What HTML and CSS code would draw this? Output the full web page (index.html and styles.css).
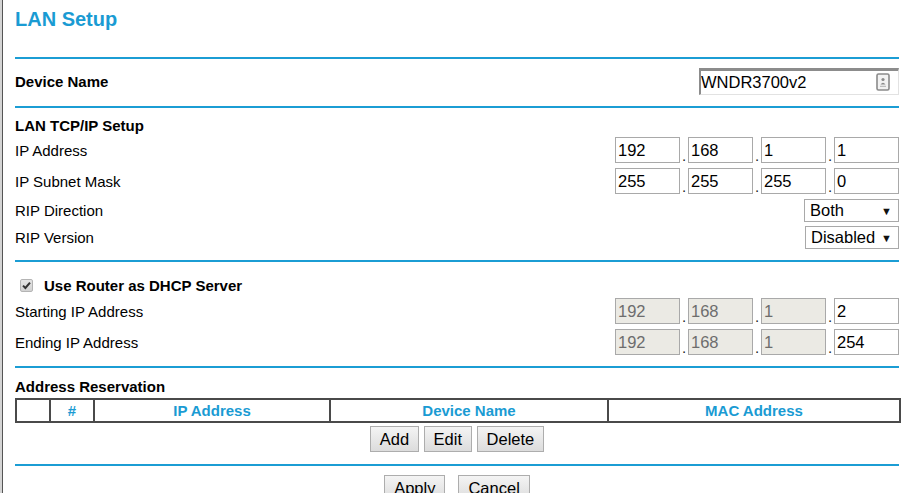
FILE: index.html
```html
<!DOCTYPE html>
<html>
<head>
<meta charset="utf-8">
<title>LAN Setup</title>
<link rel="stylesheet" href="styles.css">
</head>
<body>
<div class="page">
  <div class="content">
    <div class="title">LAN Setup</div>
    <div class="rule"></div>

    <div class="row row-device">
      <span class="label bold">Device Name</span>
      <span class="name-wrap">
        <input class="name-input" type="text" value="WNDR3700v2">
        <svg class="autofill" width="14" height="18" viewBox="0 0 14 18">
          <rect x="1" y="1" width="12" height="16" rx="1.5" fill="#f2f2f2" stroke="#8a8a8a" stroke-width="1.6"/>
          <circle cx="7" cy="6.5" r="1.6" fill="#8a8a8a"/>
          <path d="M4.5 11.5 Q7 8.2 9.5 11.5 Z" fill="#8a8a8a"/>
          <rect x="4" y="12.8" width="6" height="1" fill="#b0b0b0"/>
        </svg>
      </span>
    </div>
    <div class="rule"></div>

    <div class="subhead bold">LAN TCP/IP Setup</div>
    <div class="row row-ip">
      <span class="label">IP Address</span>
      <span class="ip">
        <input class="oct" type="text" value="192"><span class="dot">.</span><input class="oct" type="text" value="168"><span class="dot">.</span><input class="oct" type="text" value="1"><span class="dot">.</span><input class="oct" type="text" value="1">
      </span>
    </div>
    <div class="row row-ip">
      <span class="label">IP Subnet Mask</span>
      <span class="ip">
        <input class="oct" type="text" value="255"><span class="dot">.</span><input class="oct" type="text" value="255"><span class="dot">.</span><input class="oct" type="text" value="255"><span class="dot">.</span><input class="oct" type="text" value="0">
      </span>
    </div>
    <div class="row row-sel">
      <span class="label">RIP Direction</span>
      <span class="select sel-dir"><span class="sel-text">Both</span><span class="arrow">&#9660;</span></span>
    </div>
    <div class="row row-sel row-last">
      <span class="label">RIP Version</span>
      <span class="select sel-ver"><span class="sel-text">Disabled</span><span class="arrow">&#9660;</span></span>
    </div>
    <div class="rule"></div>

    <div class="dhcp bold">
      <span class="checkbox">
        <svg width="11" height="11" viewBox="0 0 11 11"><path d="M2 5.6 L4.4 8 L9 2.6" fill="none" stroke="#333" stroke-width="2"/></svg>
      </span>
      <span>Use Router as DHCP Server</span>
    </div>
    <div class="row row-ip">
      <span class="label">Starting IP Address</span>
      <span class="ip">
        <input class="oct" type="text" value="192" disabled><span class="dot">.</span><input class="oct" type="text" value="168" disabled><span class="dot">.</span><input class="oct" type="text" value="1" disabled><span class="dot">.</span><input class="oct" type="text" value="2">
      </span>
    </div>
    <div class="row row-ip row-end">
      <span class="label">Ending IP Address</span>
      <span class="ip">
        <input class="oct" type="text" value="192" disabled><span class="dot">.</span><input class="oct" type="text" value="168" disabled><span class="dot">.</span><input class="oct" type="text" value="1" disabled><span class="dot">.</span><input class="oct" type="text" value="254">
      </span>
    </div>
    <div class="rule"></div>

    <div class="reshead bold">Address Reservation</div>
    <table class="res">
      <colgroup>
        <col class="c1"><col class="c2"><col class="c3"><col class="c4"><col class="c5">
      </colgroup>
      <tr>
        <th></th><th>#</th><th>IP Address</th><th>Device Name</th><th>MAC Address</th>
      </tr>
    </table>
    <div class="buttons btn-res">
      <button class="btn">Add</button>
      <button class="btn">Edit</button>
      <button class="btn">Delete</button>
    </div>
    <div class="rule"></div>
    <div class="buttons btn-main">
      <button class="btn">Apply</button>
      <button class="btn">Cancel</button>
    </div>
  </div>
</div>
</body>
</html>
```

FILE: styles.css
```css
html, body {
  margin: 0;
  padding: 0;
  background: #fff;
}
body {
  border-left: 2px solid #d4d4d4;
  font-family: "Liberation Sans", Arial, sans-serif;
  font-size: 15px;
  color: #000;
  overflow: hidden;
  height: 493px;
}
.page {
  border-left: 1px solid #555;
  height: 100%;
  padding-left: 12px;
}
.content {
  width: 884px;
}
.bold { font-weight: bold; }

.title {
  height: 57px;
  box-sizing: border-box;
  padding-top: 8px;
  font-size: 20px;
  line-height: 23px;
  font-weight: bold;
  color: #1a9bd3;
}
.rule {
  height: 2px;
  background: #1b9dd4;
}

.row {
  display: flex;
  align-items: flex-start;
  justify-content: space-between;
}
.label { line-height: 27px; }

.row-device {
  height: 47px;
  box-sizing: border-box;
  padding-top: 9px;
}
.row-device .label { line-height: 27px; }
.name-wrap {
  position: relative;
  display: block;
  width: 200px;
  height: 27px;
}
.name-input {
  box-sizing: border-box;
  width: 200px;
  height: 27px;
  margin: 0;
  padding: 0;
  border-style: solid;
  border-width: 3px 1px 1px 2px;
  border-color: #8c8c8c #e2e2e2 #e2e2e2 #8c8c8c;
  font-family: "Liberation Sans", Arial, sans-serif;
  font-size: 16.5px;
  color: #000;
  outline: none;
}
.autofill {
  position: absolute;
  right: 9px;
  top: 5px;
}

.subhead {
  height: 29px;
  box-sizing: border-box;
  padding-top: 7px;
  line-height: 21px;
}

.row-ip { height: 31px; }
.row-end { height: 37px; }
.ip {
  display: flex;
  align-items: flex-start;
  height: 26px;
}
.oct {
  box-sizing: border-box;
  width: 65px;
  height: 26px;
  margin: 0;
  padding: 0 0 0 2px;
  border: 1px solid #a9a9a9;
  font-family: "Liberation Sans", Arial, sans-serif;
  font-size: 16.5px;
  color: #000;
  background: #fff;
  outline: none;
}
.oct:disabled {
  background: #ebeae4;
  color: #6d6d6d;
  border-color: #a9a9a9;
}
.dot {
  width: 8px;
  align-self: flex-end;
  text-align: center;
  font-size: 15px;
  line-height: 1;
  color: #222;
}

.row-sel { height: 27px; }
.row-last { height: 34px; }
.row-sel .label { line-height: 24px; }
.select {
  box-sizing: border-box;
  display: flex;
  align-items: center;
  justify-content: space-between;
  height: 23px;
  border: 1px solid #a9a9a9;
  background: #fff;
  font-size: 16.5px;
  padding: 0 6px 0 5px;
}
.sel-dir { width: 95px; }
.sel-ver { width: 94px; }
.arrow {
  font-size: 11px;
  color: #111;
}

.dhcp {
  height: 36px;
  box-sizing: border-box;
  padding-top: 12px;
  line-height: 20px;
  display: flex;
  align-items: center;
  padding-left: 5px;
}
.dhcp .checkbox {
  box-sizing: border-box;
  width: 13px;
  height: 13px;
  border: 1px solid #b4b4b4;
  border-radius: 2px;
  background: linear-gradient(#e4e4e4, #d2d2d2);
  display: flex;
  align-items: center;
  justify-content: center;
  margin-right: 11px;
  margin-top: -1px;
}
.dhcp .checkbox svg { display: block; }

.reshead {
  height: 30px;
  box-sizing: border-box;
  padding-top: 8px;
  line-height: 21px;
}
.res {
  width: 884px;
  table-layout: fixed;
  border-collapse: collapse;
  border: 2px solid #4a4a4a;
}
.res .c1 { width: 34px; }
.res .c2 { width: 44px; }
.res .c3 { width: 236px; }
.res .c4 { width: 278px; }
.res .c5 { width: 292px; }
.res th {
  border: 2px solid #4a4a4a;
  height: 21px;
  padding: 0;
  line-height: 20px;
  font-size: 15px;
  font-weight: bold;
  color: #1a9bd3;
  text-align: center;
}

.buttons {
  display: flex;
  justify-content: center;
}
.btn-res {
  margin-top: 3px;
  margin-bottom: 12px;
  gap: 4.5px;
}
.btn-main {
  margin-top: 9px;
  gap: 13px;
}
.btn {
  box-sizing: border-box;
  height: 26px;
  margin: 0;
  padding: 0 9px;
  border: 1px solid #adadad;
  border-radius: 0;
  background: linear-gradient(#f4f4f4, #dcdcdc);
  font-family: "Liberation Sans", Arial, sans-serif;
  font-size: 16.5px;
  color: #000;
}
```
